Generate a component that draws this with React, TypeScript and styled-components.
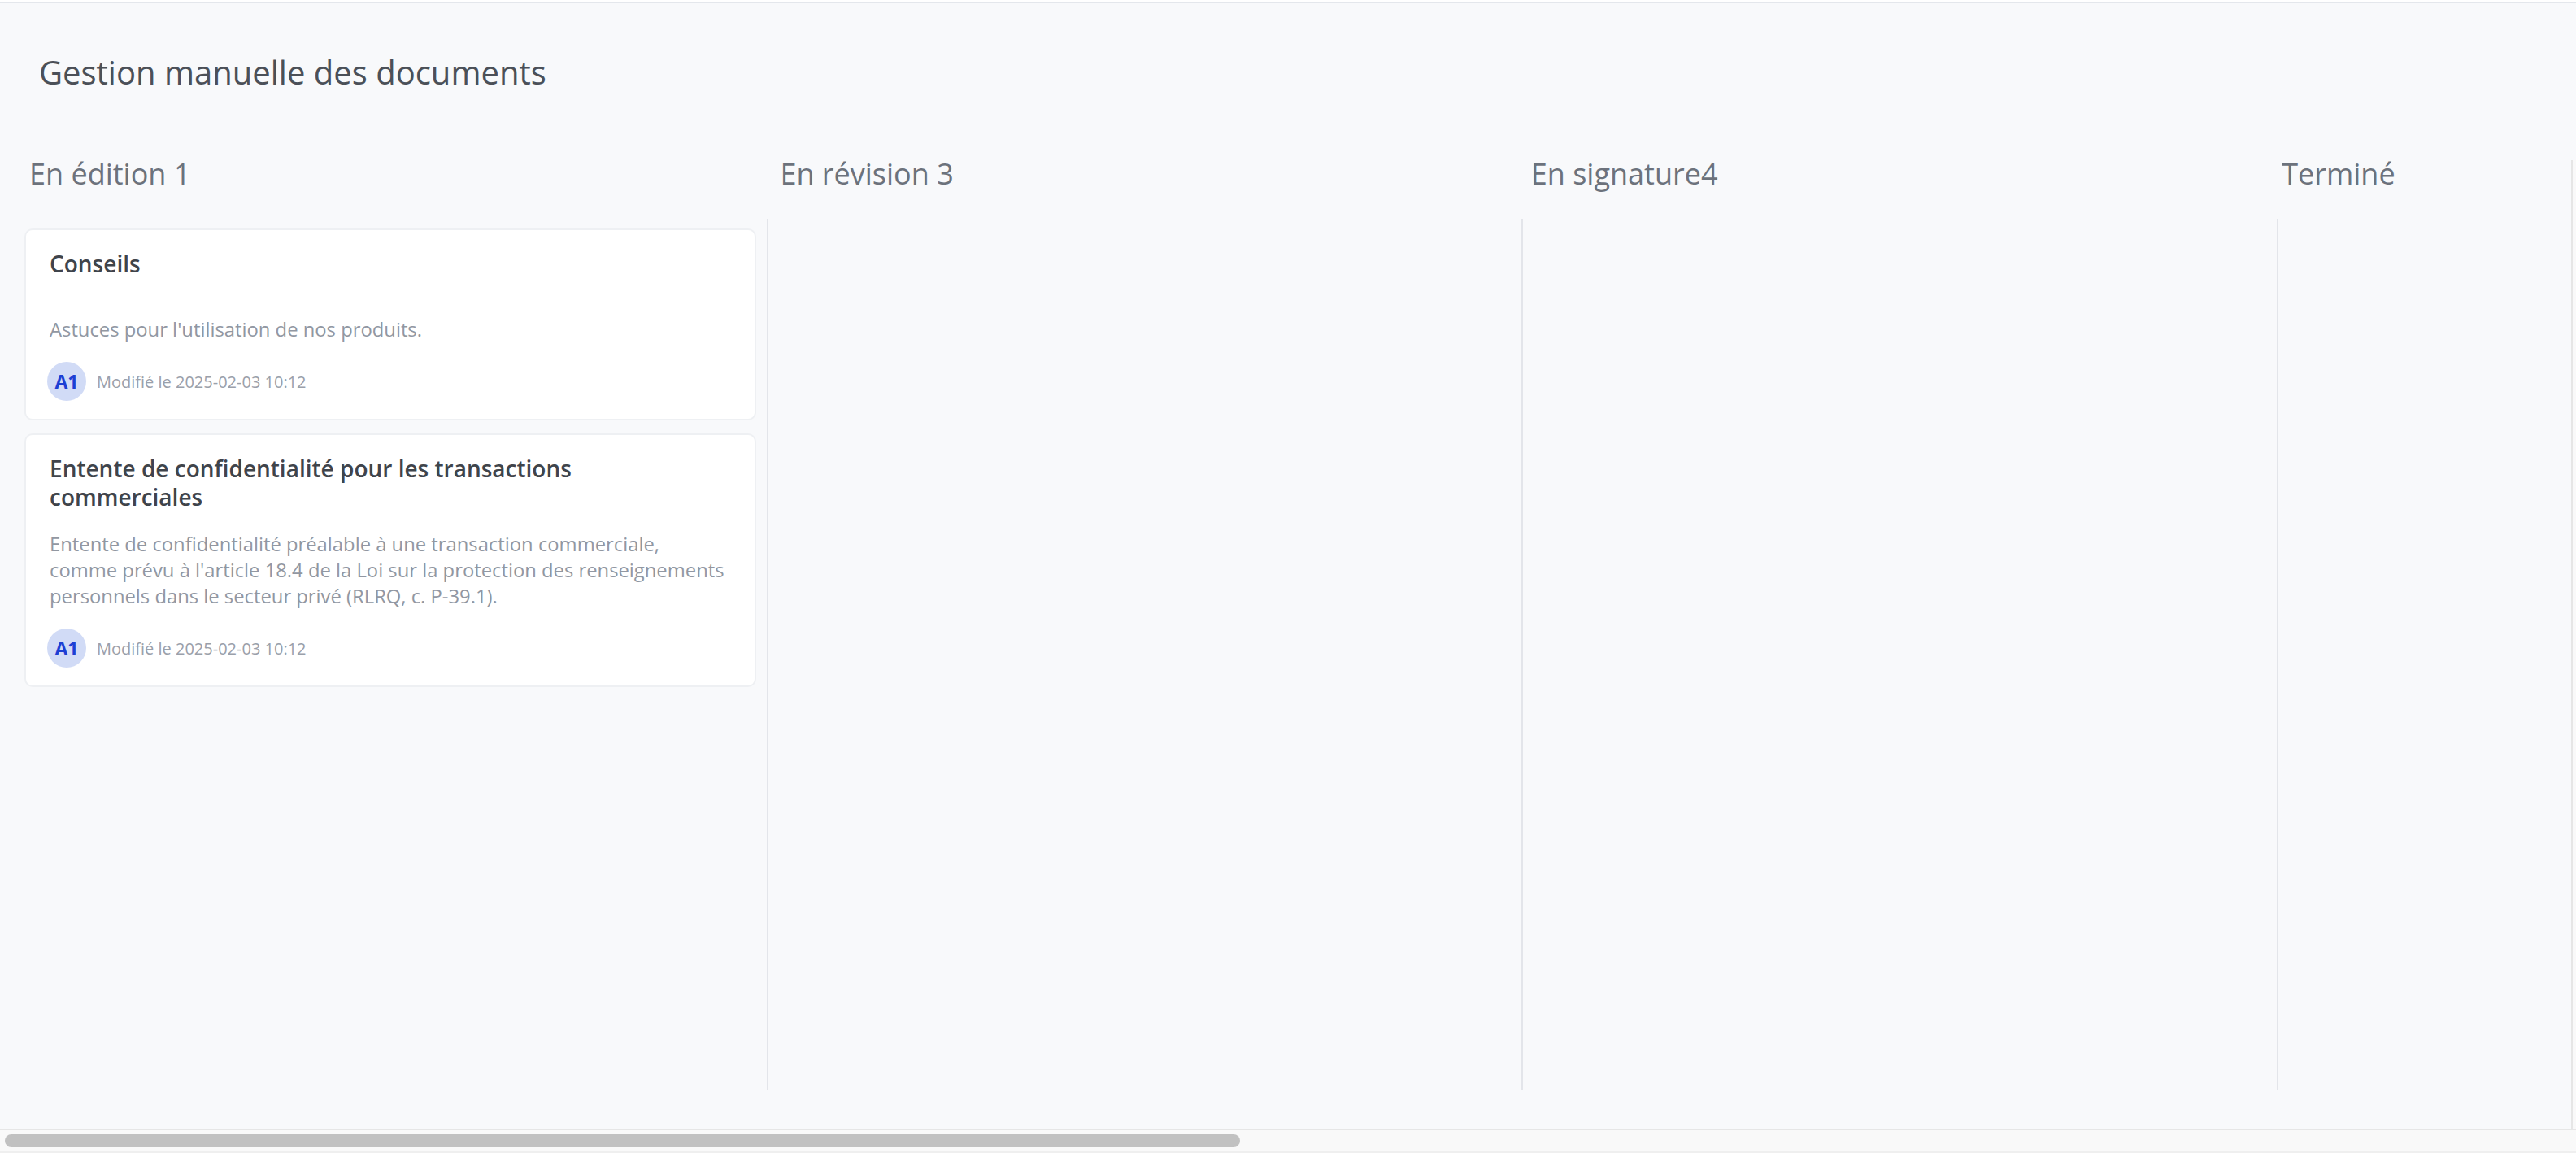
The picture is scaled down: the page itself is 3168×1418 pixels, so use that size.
import styled, { createGlobalStyle } from "styled-components"

type Doc = {
  id: number
  title: string
  description: string
  initials: string
  modified: string
}

type Column = {
  id: string
  label: string
  docs: Doc[]
}

const columns: Column[] = [
  {
    id: "edition",
    label: "En édition 1",
    docs: [
      {
        id: 1,
        title: "Conseils",
        description: "Astuces pour l'utilisation de nos produits.",
        initials: "A1",
        modified: "2025-02-03 10:12",
      },
      {
        id: 2,
        title: "Entente de confidentialité pour les transactions commerciales",
        description:
          "Entente de confidentialité préalable à une transaction commerciale, comme prévu à l'article 18.4 de la Loi sur la protection des renseignements personnels dans le secteur privé (RLRQ, c. P-39.1).",
        initials: "A1",
        modified: "2025-02-03 10:12",
      },
    ],
  },
  { id: "revision", label: "En révision 3", docs: [] },
  { id: "signature", label: "En signature4", docs: [] },
  { id: "done", label: "Terminé", docs: [] },
]

const App = () => {
  return (
    <>
      <GlobalStyle />
      <Page>
        <TopRule />
        <PageHeader>
          <PageTitle>Gestion manuelle des documents</PageTitle>
        </PageHeader>

        <Board>
          <BoardBody>
            <Viewport>
              <HeaderRow>
                {columns.map((col) => (
                  <ColumnHeader key={col.id}>{col.label}</ColumnHeader>
                ))}
              </HeaderRow>

              <LaneRow>
                {columns.map((col, i) => (
                  <Lane key={col.id} $divided={i > 0}>
                    {col.docs.map((doc) => (
                      <Card key={doc.id}>
                        <CardTitle>{doc.title}</CardTitle>
                        <CardText>{doc.description}</CardText>
                        <Meta>
                          <Avatar>{doc.initials}</Avatar>
                          <span>Modifié le {doc.modified}</span>
                        </Meta>
                      </Card>
                    ))}
                  </Lane>
                ))}
              </LaneRow>
            </Viewport>
            <VTrack />
          </BoardBody>

          <HTrack>
            <HThumb />
          </HTrack>
        </Board>
      </Page>
    </>
  )
}

export default App

const GlobalStyle = createGlobalStyle`
  html, body {
    margin:0;
    padding:0;
    background:#f8f9fb;
  }
  body{
    font-family:"Open Sans", "Noto Sans", Arial, sans-serif;
  }
  *{
    box-sizing:border-box;
  }
`

const Page = styled.div`
  height:100vh;
  display:flex;
  flex-direction:column;
  overflow:hidden;
  background:#f8f9fb;
`

const TopRule = styled.div`
  height:4px;
  flex-shrink:0;
  background:#fff;
  border-bottom:2px solid #e4e7ec;
`

const PageHeader = styled.header`
  height:185px;
  flex-shrink:0;
  padding:60px 48px 0;
`

const PageTitle = styled.h1`
  margin:0;
  font-size:40px;
  line-height:55px;
  margin-top:-3px;
  font-weight:400;
  color:#4b5058;
`

const Board = styled.section`
  flex:1;
  min-height:0;
  display:flex;
  flex-direction:column;
`

const BoardBody = styled.div`
  flex:1;
  min-height:0;
  display:flex;
`

const Viewport = styled.div`
  flex:1;
  min-width:0;
  overflow:hidden;
`

const HeaderRow = styled.div`
  height:80px;
  display:grid;
  grid-template-columns:repeat(4, 923.4px);
  padding-left:36px;
`

const ColumnHeader = styled.h2`
  margin:0;
  font-size:36px;
  line-height:49px;
  font-weight:400;
  color:#6c727c;
  white-space:nowrap;
`

const LaneRow = styled.div`
  display:grid;
  grid-template-columns:repeat(4, 928.6px);
  padding-left:14px;
`

const Lane = styled.div<{ $divided: boolean }>`
  height:1071px;
  padding:12px 13px 0 14px;
  border-left:2px solid ${(p) => (p.$divided ? "#e3e5ea" : "transparent")};
  display:flex;
  flex-direction:column;
  gap:16px;
`

const Card = styled.article`
  background:#fff;
  border:2px solid #eef0f3;
  border-radius:10px;
  padding:24px 33px 22px 29px;
  display:flex;
  flex-direction:column;
  gap:24px;
`

const CardTitle = styled.h3`
  margin:0;
  min-height:58px;
  font-size:28px;
  line-height:35px;
  font-weight:600;
  color:#3f444b;
`

const CardText = styled.p`
  margin:0;
  font-size:23.8px;
  line-height:32px;
  color:#9197a2;
`

const Meta = styled.div`
  display:flex;
  align-items:center;
  gap:13px;
  margin-left:-3px;
  font-size:20px;
  color:#9aa0aa;
`

const Avatar = styled.span`
  width:48px;
  height:48px;
  border-radius:50%;
  background:#d1dbf6;
  color:#1d3fd4;
  font-size:23px;
  font-weight:700;
  display:flex;
  align-items:center;
  justify-content:center;
`

const VTrack = styled.div`
  width:6px;
  flex-shrink:0;
  margin-top:8px;
  background:#f9f9f9;
  border-left:2px solid #e6e6e6;
`

const HTrack = styled.div`
  height:30px;
  flex-shrink:0;
  background:#f9f9f9;
  border-top:2px solid #e6e6e6;
  border-bottom:2px solid #efefef;
  padding:5px 0 0 6px;
`

const HThumb = styled.div`
  width:1519px;
  height:16px;
  border-radius:8px;
  background:#c1c1c1;
`
